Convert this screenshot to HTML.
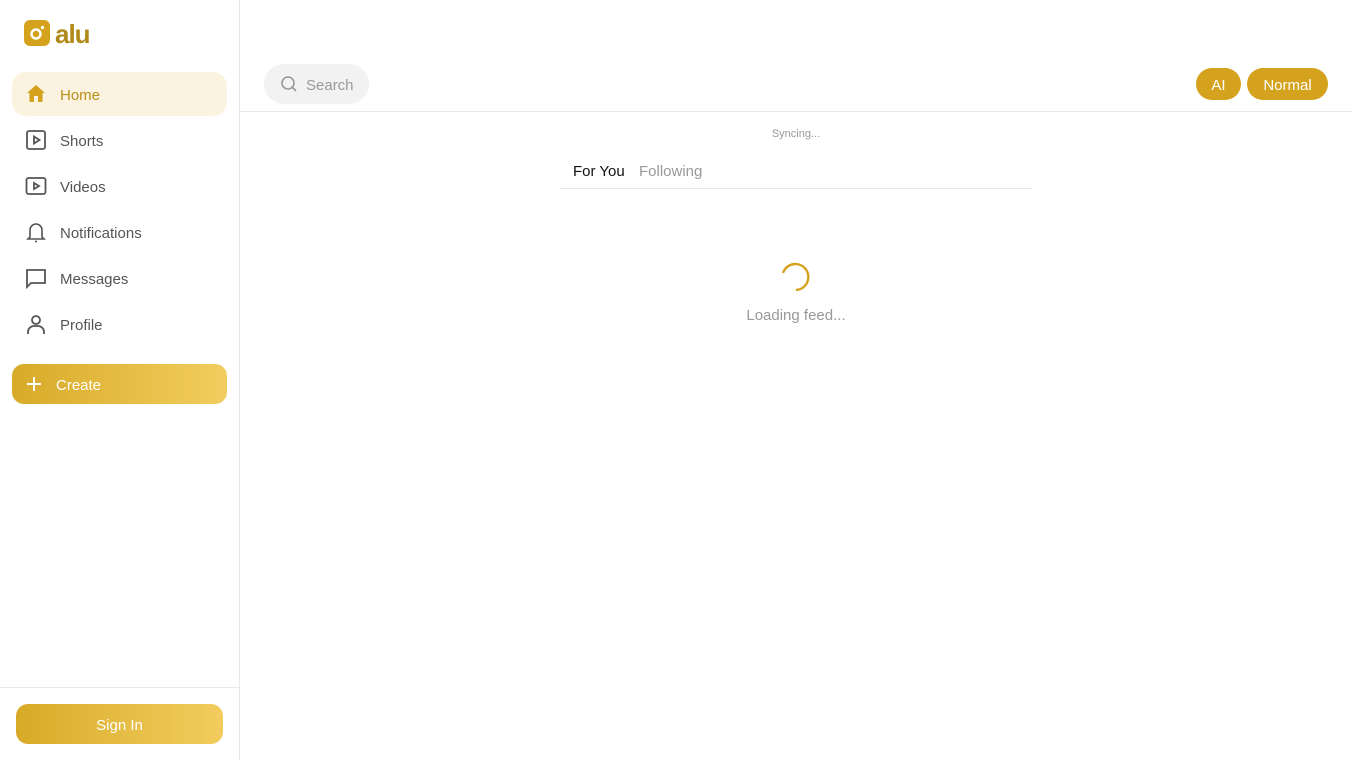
<!DOCTYPE html>
<html><head><meta charset="utf-8"><style>
*{box-sizing:border-box;margin:0;padding:0}
body{width:1352px;height:760px;background:#fff;font-family:"Liberation Sans",sans-serif;position:relative;overflow:hidden}
.side{position:absolute;left:0;top:0;width:240px;height:760px;border-right:1px solid #e8e8e8}
.logo{position:absolute;left:24px;top:19px;display:flex;align-items:center}
.logo .b{width:26px;height:26px;border-radius:6px;background:#d4a21c;position:relative}
.logo .t{font-weight:bold;font-size:26px;color:#b08a18;margin-left:5px;letter-spacing:-1px;line-height:26px;padding-top:2px}
.nav{position:absolute;left:12px;width:215px;height:44px;display:flex;align-items:center;padding-left:12px;font-size:15px;color:#555}
.nav span{padding-top:2px}
.nav svg{width:24px;height:24px;margin-right:12px}
.act{background:#fbf3df;border-radius:14px;color:#b8901a}
.create{position:absolute;left:12px;top:364px;width:215px;height:40px;border-radius:12px;background:linear-gradient(90deg,#d8aa28,#f2cd5e);color:#fff;font-size:15px;display:flex;align-items:center;padding-left:12px}
.signwrap{position:absolute;left:0;top:687px;width:239px;border-top:1px solid #e8e8e8}
.sign{position:absolute;left:16px;top:16px;width:207px;height:40px;border-radius:12px;background:linear-gradient(90deg,#d8aa28,#f2cd5e);color:#fff;font-size:15px;display:flex;align-items:center;justify-content:center;padding-top:2px}
.top{position:absolute;left:240px;top:111px;width:1112px;border-top:1px solid #e8e8e8}
.search{position:absolute;left:264px;top:64px;width:105px;height:40px;border-radius:20px;background:#f2f2f2;display:flex;align-items:center;padding-left:16px;color:#999;font-size:15px}
.pill{position:absolute;top:68px;height:32px;border-radius:16px;background:#d4a21c;color:#fff;font-size:15px;display:flex;align-items:center;justify-content:center;padding-top:2px}
</style></head><body>
<div class="side">
 <div class="logo"><div class="b"><svg width="26" height="26" viewBox="0 0 26 26"><circle cx="12" cy="14" r="4.5" fill="none" stroke="#fff" stroke-width="2.4"/><circle cx="18.5" cy="7.5" r="1.6" fill="#fff"/></svg></div><div class="t">alu</div></div>
 <div class="nav act" style="top:72px"><svg viewBox="0 0 24 24"><path d="M3 11L12 3l9 8h-2.5v9h-4.5v-6h-4v6H5.5v-9z" fill="#d4a21c"/></svg><span>Home</span></div>
 <div class="nav" style="top:118px"><svg viewBox="0 0 24 24" fill="none" stroke="#555" stroke-width="1.8"><rect x="3" y="3" width="18" height="18" rx="2"/><path d="M10 8.5v7l5.5-3.5z"/></svg><span>Shorts</span></div>
 <div class="nav" style="top:164px"><svg viewBox="0 0 24 24" fill="none" stroke="#555" stroke-width="1.8"><rect x="2.5" y="4" width="19" height="16" rx="2"/><path d="M10 9v6l5-3z"/></svg><span>Videos</span></div>
 <div class="nav" style="top:210px"><svg viewBox="0 0 24 24" fill="none" stroke="#555" stroke-width="1.6"><path d="M6 17V10a6 6 0 0 1 12 0v7l2 2H4z"/><path d="M11 21.5h2"/></svg><span>Notifications</span></div>
 <div class="nav" style="top:256px"><svg viewBox="0 0 24 24" fill="none" stroke="#555" stroke-width="1.8"><path d="M3 4h18v13H7l-4 4z"/></svg><span>Messages</span></div>
 <div class="nav" style="top:302px"><svg viewBox="0 0 24 24" fill="none" stroke="#555" stroke-width="1.8"><circle cx="12" cy="8" r="4"/><path d="M4 22v-2a6 6 0 0 1 6-6h4a6 6 0 0 1 6 6v2"/></svg><span>Profile</span></div>
 <div class="create"><svg width="20" height="20" viewBox="0 0 20 20" style="margin-right:12px"><path d="M10 3v14M3 10h14" stroke="#fff" stroke-width="2"/></svg><span style="padding-top:2px">Create</span></div>
 <div class="signwrap"><div class="sign">Sign In</div></div>
</div>
<div class="search"><svg width="18" height="18" viewBox="0 0 18 18" fill="none" stroke="#999" stroke-width="1.6" style="margin-right:8px"><circle cx="8" cy="8" r="6"/><path d="M12.5 12.5L16 16"/></svg><span style="padding-top:2px">Search</span></div>
<div class="pill" style="left:1196px;width:45px">AI</div>
<div class="pill" style="left:1247px;width:81px">Normal</div>
<div class="top"></div>
<div style="position:absolute;left:740px;width:112px;top:128px;text-align:center;font-size:11px;color:#999">Syncing...</div>
<div style="position:absolute;left:560px;top:188px;width:472px;border-top:1px solid #e8e8e8"></div>
<div style="position:absolute;left:573px;top:163px;font-size:15px;color:#111">For You</div>
<div style="position:absolute;left:639px;top:163px;font-size:15px;color:#999">Following</div>
<svg style="position:absolute;left:779px;top:260px" width="34" height="34" viewBox="0 0 34 34"><path d="M4 13A13 13 0 1 1 17 30" fill="none" stroke="#d4a21c" stroke-width="2.4"/></svg>
<div style="position:absolute;left:700px;width:192px;top:307px;text-align:center;font-size:15px;color:#999">Loading feed...</div>
</body></html>
